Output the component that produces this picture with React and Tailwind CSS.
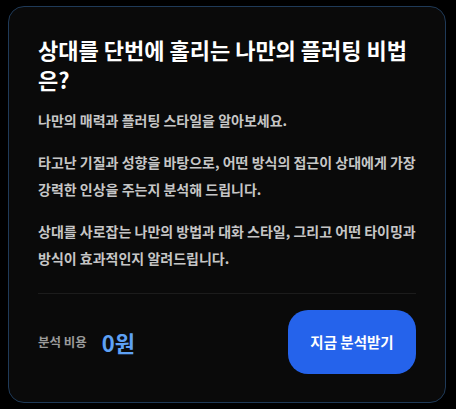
export default function App() {
  return (
    <div
      className="min-h-screen w-full bg-black p-[6px_10px_6px_8px]"
      style={{ fontFamily: '"Noto Sans CJK KR", "Noto Sans", sans-serif' }}
    >
      <div className="rounded-2xl border border-[#1f3a58] bg-[#0a0a0a] px-[29px] pt-[27px] pb-[28px]">
        <h1 className="text-[22px] font-bold leading-[30px] text-white">
          상대를 단번에 홀리는 나만의 플러팅 비법 은?
        </h1>

        <div className="mt-[13px] space-y-[15px] text-[14px] font-semibold leading-[27px] text-[#c6c6c6]">
          <p>나만의 매력과 플러팅 스타일을 알아보세요.</p>
          <p>
            타고난 기질과 성향을 바탕으로, 어떤 방식의 접근이 상대에게 가장
            강력한 인상을 주는지 분석해 드립니다.
          </p>
          <p>
            상대를 사로잡는 나만의 방법과 대화 스타일, 그리고 어떤 타이밍과
            방식이 효과적인지 알려드립니다.
          </p>
        </div>

        <div className="mt-[21px] h-px bg-[#1c1c1c]" />

        <div className="mt-[16px] flex items-center justify-between">
          <div className="flex items-center gap-[15px]">
            <span className="text-[12.5px] font-semibold text-[#9a9a9a]">분석 비용</span>
            <span className="text-[22px] font-bold text-[#5ea1f5]">0원</span>
          </div>
          <button className="h-[64px] w-[128px] rounded-[20px] bg-[#2563eb] text-[14.5px] font-bold text-white">
            지금 분석받기
          </button>
        </div>
      </div>
    </div>
  );
}
